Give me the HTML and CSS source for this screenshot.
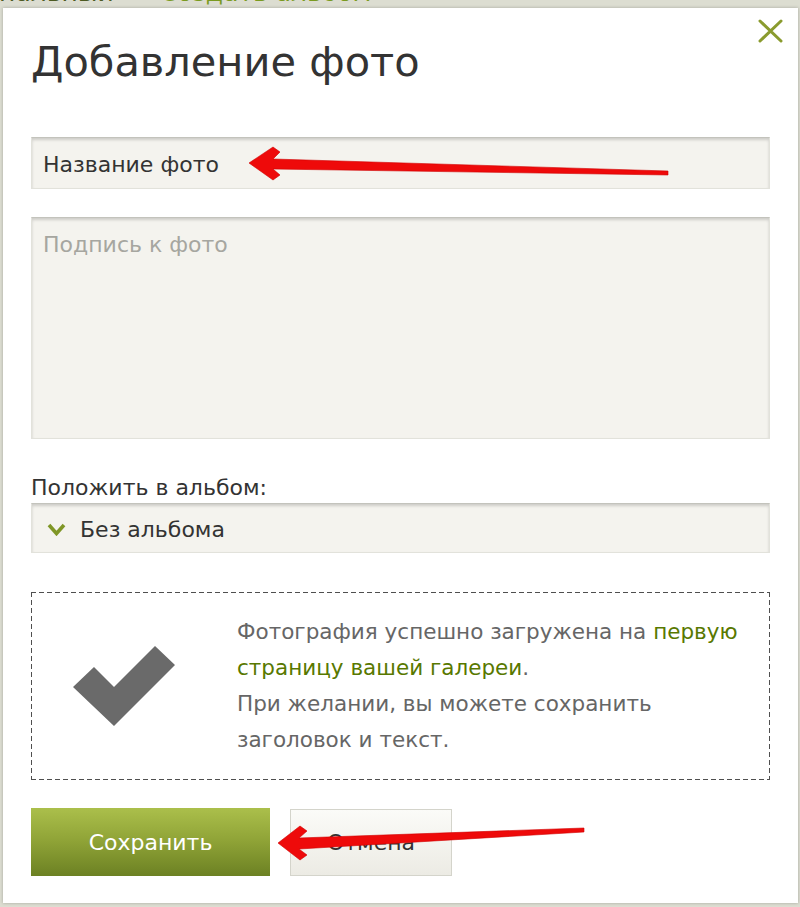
FILE: index.html
```html
<!DOCTYPE html>
<html lang="ru">
<head>
<meta charset="utf-8">
<title>Добавление фото</title>
<meta name="viewport" content="width=device-width">
<link rel="stylesheet" href="styles.css">
</head>
<body>

<div class="site-bar">
  <span class="site-link">Персональный</span>
  <span class="site-create"><span class="create-icon"></span>Создать альбом</span>
</div>

<div class="modal">
  <a class="modal-close" href="#" title="Закрыть">
    <svg width="25" height="24" viewBox="0 0 25 24"><path d="M2 2 L23 22 M23 2 L2 22" stroke="#8a9b2e" stroke-width="3" stroke-linecap="round" fill="none"/></svg>
  </a>

  <h1 class="modal-title">Добавление фото</h1>

  <form class="photo-form">
    <input class="field field-name" type="text" value="Название фото">
    <textarea class="field field-caption" placeholder="Подпись к фото"></textarea>

    <label class="field-label">Положить в альбом:</label>
    <div class="select">
      <svg class="select-arrow" width="19" height="13" viewBox="0 0 19 13"><path d="M2 2 L9.5 10.5 L17 2" stroke="#7f9626" stroke-width="3.6" fill="none"/></svg>
      <span>Без альбома</span>
    </div>

    <div class="upload-note">
      <svg class="note-check" width="102" height="80" viewBox="73 646 102 80"><polygon points="73,687 94,667 114,687 155,646 175,665 114,726" fill="#6a6a6a"/></svg>
      <p class="note-text">Фотография успешно загружена на <a href="#">первую страницу вашей галереи</a>.<br>При желании, вы можете сохранить заголовок и текст.</p>
    </div>

    <div class="actions">
      <button class="btn btn-save" type="button">Сохранить</button>
      <button class="btn btn-cancel" type="button">Отмена</button>
    </div>
  </form>
</div>

<svg class="marks" width="800" height="907" viewBox="0 0 800 907">
  <polygon points="249,163 273,147 280,152 273,159 668,171 668,175 273,169 280,175 273,180" fill="#ee0a0a" stroke="#d00000" stroke-width="0.6" stroke-linejoin="round"/>
  <polygon points="278,843 300,826 307,831 299,838 584,828 584,832 299,849 307,855 300,860" fill="#ee0a0a" stroke="#d00000" stroke-width="0.6" stroke-linejoin="round"/>
</svg>

</body>
</html>
```

FILE: styles.css
```css
* {
  box-sizing: border-box;
}

body {
  margin: 0;
  background: #dcddd1;
  font-family: "DejaVu Sans", Verdana, sans-serif;
  color: #333;
}

/* page behind the dialog, only its lower edge shows */
.site-bar {
  display: flex;
  align-items: flex-start;
  height: 8px;
  overflow: hidden;
  font-size: 25px;
  line-height: 30px;
  white-space: nowrap;
}

.site-link {
  margin: -22px 0 0 -80px;
  color: #4d5a22;
}

.site-create {
  display: flex;
  align-items: center;
  margin: -22px 0 0 22px;
  color: #7a9a20;
}

.create-icon {
  display: inline-block;
  width: 18px;
  height: 14px;
  border: 2px solid #7a9a20;
  margin-right: 6px;
}

.modal {
  position: relative;
  margin: 0 2px 4px 3px;
  padding: 30px 28px 27px;
  background: #fff;
  box-shadow: 0 0 3px rgba(0,0,0,0.25);
}

.modal-close {
  position: absolute;
  top: 11px;
  right: 15px;
  display: block;
  width: 25px;
  height: 24px;
}

.modal-close svg {
  display: block;
}

.modal-title {
  margin: 0;
  font-size: 41.5px;
  line-height: 48px;
  font-weight: normal;
  color: #333;
}

.photo-form {
  margin: 51px 0 0;
}

.field {
  display: block;
  width: 100%;
  margin: 0;
  border: 1px solid #e2e2db;
  border-top-color: #c3c3bc;
  background: #f4f3ee;
  box-shadow: inset 0 2px 3px rgba(0,0,0,0.16);
  font-family: "DejaVu Sans", Verdana, sans-serif;
  font-size: 22px;
  color: #333;
  outline: none;
}

.field-name {
  height: 52px;
  padding: 2px 11px 0;
}

.field-caption {
  height: 222px;
  margin-top: 28px;
  padding: 14px 11px;
  resize: none;
}

.field-caption::placeholder {
  color: #a6a6a0;
}

.field-label {
  display: block;
  margin: 36px 0 2px;
  font-size: 22px;
  line-height: 26px;
  color: #333;
}

.select {
  display: flex;
  align-items: center;
  gap: 14px;
  height: 50px;
  padding: 2px 15px 0;
  border: 1px solid #e2e2db;
  border-top-color: #c3c3bc;
  background: #f4f3ee;
  box-shadow: inset 0 2px 3px rgba(0,0,0,0.16);
  font-size: 22px;
  color: #333;
}

.select-arrow {
  display: block;
}

.upload-note {
  display: flex;
  align-items: center;
  height: 188px;
  margin-top: 39px;
  padding: 0 8px 0 42px;
  background:
    repeating-linear-gradient(90deg, #4f4f4f 0 5px, transparent 5px 8px) left top / 100% 1px no-repeat,
    repeating-linear-gradient(90deg, #4f4f4f 0 5px, transparent 5px 8px) left bottom / 100% 1px no-repeat,
    repeating-linear-gradient(180deg, #4f4f4f 0 5px, transparent 5px 8px) left top / 1px 100% no-repeat,
    repeating-linear-gradient(180deg, #4f4f4f 0 5px, transparent 5px 8px) right top / 1px 100% no-repeat;
}

.note-check {
  display: block;
  flex: none;
  margin-right: 62px;
}

.note-text {
  margin: 0;
  font-size: 21.5px;
  line-height: 36px;
  color: #666;
}

.note-text a {
  color: #587800;
  text-decoration: none;
}

.actions {
  display: flex;
  align-items: flex-start;
  gap: 20px;
  margin-top: 28px;
}

.btn {
  margin: 0;
  padding: 0;
  font-family: "DejaVu Sans", Verdana, sans-serif;
  font-size: 22px;
  cursor: pointer;
}

.btn-save {
  width: 239px;
  height: 68px;
  border: none;
  background: linear-gradient(#abbf4b, #8ea236 50%, #6c8123);
  color: #fff;
}

.btn-cancel {
  width: 162px;
  height: 67px;
  margin-top: 1px;
  border: 1px solid #d4d4cb;
  background: linear-gradient(#fbfbf8, #ecebe4);
  color: #333;
}

.marks {
  position: absolute;
  top: 0;
  left: 0;
  pointer-events: none;
}
```
